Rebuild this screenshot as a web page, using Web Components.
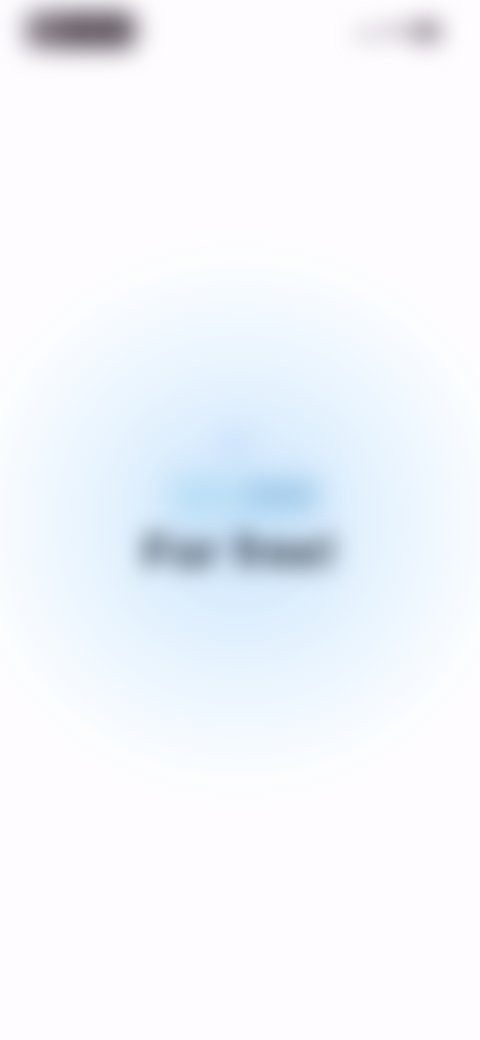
<!DOCTYPE html>
<html lang="en">
  <head>
    <meta charset="UTF-8" />
    <meta name="viewport" content="width=device-width, initial-scale=1.0" />
    <title>Splash</title>
    <style>
      body {
        margin: 0;
        background: #fefcff;
        font-family: "Liberation Sans", Arial, sans-serif;
      }
    </style>
  </head>
  <body>
    <splash-screen>
      <status-bar slot="status"></status-bar>
      <splash-logo slot="logo"></splash-logo>
      <splash-title slot="title">For free!</splash-title>
    </splash-screen>
    <script>
      function define(name, html) {
        const template = document.createElement("template");
        template.innerHTML = html;
        customElements.define(
          name,
          class extends HTMLElement {
            constructor() {
              super();
              this.attachShadow({ mode: "open" });
              this.shadowRoot.append(template.content.cloneNode(true));
            }
          }
        );
      }

      define(
        "status-bar",
        `
        <style>
          :host {
            display: flex;
            justify-content: space-between;
            align-items: center;
            height: 60px;
            padding: 0 24px;
          }
          .pill {
            width: 112px;
            height: 38px;
            border-radius: 12px;
            background: linear-gradient(90deg, #968d98, #625662 45%, #655b66);
            filter: blur(12px);
          }
          svg {
            width: 112px;
            height: 60px;
            overflow: visible;
            filter: blur(11px);
          }
        </style>
        <div class="pill"></div>
        <svg viewBox="0 0 112 60" fill="#9c929d" aria-hidden="true">
          <rect x="12" y="27" width="24" height="14" opacity="0.4" />
          <rect x="40" y="23" width="28" height="16" opacity="0.5" />
          <rect x="68" y="19" width="30" height="25" rx="8" opacity="0.9" />
        </svg>
      `
      );

      define(
        "splash-logo",
        `
        <style>
          :host {
            display: block;
          }
          svg {
            display: block;
            width: 200px;
            height: 96px;
            overflow: visible;
            filter: blur(14px);
          }
        </style>
        <svg viewBox="0 0 200 96" aria-hidden="true">
          <circle cx="95" cy="20" r="14" fill="#bad5fa" opacity="0.6" />
          <path d="M30 48H176V100H30Z" fill="#b3dcf5" opacity="0.6" />
          <path d="M32 56H86V76H32Z" fill="#aad9f1" opacity="0.4" />
          <path d="M106 59H178V78H106Z" fill="#88b4dc" opacity="0.7" />
        </svg>
      `
      );

      define(
        "splash-title",
        `
        <style>
          :host {
            display: block;
          }
          h1 {
            margin: 0;
            font-size: 48px;
            line-height: 60px;
            font-weight: bold;
            color: #24303f;
            white-space: nowrap;
            filter: blur(11px);
          }
        </style>
        <h1><slot></slot></h1>
      `
      );

      define(
        "splash-screen",
        `
        <style>
          :host {
            display: flex;
            flex-direction: column;
            min-height: 100vh;
            overflow: hidden;
            /* soft blue glow behind the logo */
            background: radial-gradient(
              circle 290px at 50% 50%,
              #d2e7fc 0%,
              #dbedfd 30%,
              #e8f4fe 52%,
              #f3f9ff 74%,
              #fbfdff 90%,
              #fefcff 100%
            );
          }
          main {
            flex: 1;
            display: flex;
            flex-direction: column;
            align-items: center;
            justify-content: center;
            padding-bottom: 92px;
          }
        </style>
        <slot name="status"></slot>
        <main>
          <slot name="logo"></slot>
          <slot name="title"></slot>
        </main>
      `
      );
    </script>
  </body>
</html>
